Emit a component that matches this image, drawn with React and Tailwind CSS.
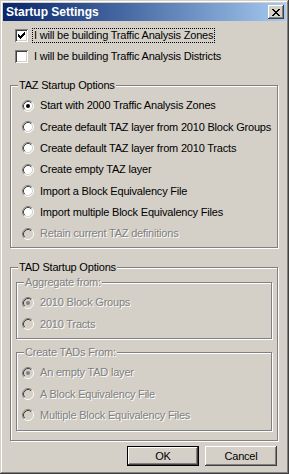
import React from "react";

const FACE = "#d4d0c8";

function Radio({ checked, disabled }) {
  const fill = disabled ? FACE : "#ffffff";
  const dot = disabled ? "#808080" : "#000000";
  return (
    <svg width="12" height="12" viewBox="0 0 12 12" className="shrink-0">
      <circle cx="6" cy="6" r="5" fill={fill} />
      <path d="M2.11 9.89 A5.5 5.5 0 0 1 9.89 2.11" fill="none" stroke="#808080" strokeWidth="1" />
      <path d="M9.89 2.11 A5.5 5.5 0 0 1 2.11 9.89" fill="none" stroke="#ffffff" strokeWidth="1" />
      <path d="M2.82 9.18 A4.5 4.5 0 0 1 9.18 2.82" fill="none" stroke="#404040" strokeWidth="1" />
      <path d="M9.18 2.82 A4.5 4.5 0 0 1 2.82 9.18" fill="none" stroke={FACE} strokeWidth="1" />
      {checked && <circle cx="6" cy="6" r="2" fill={dot} />}
    </svg>
  );
}

function Check({ checked }) {
  return (
    <div className="w-[13px] h-[13px] shrink-0 bg-white shadow-[inset_1px_1px_#808080,inset_-1px_-1px_#ffffff,inset_2px_2px_#404040,inset_-2px_-2px_#d4d0c8]">
      {checked && (
        <svg width="13" height="13" viewBox="0 0 13 13" shapeRendering="crispEdges">
          <rect x="9" y="3" width="1" height="1" fill="#000" />
          <rect x="8" y="4" width="2" height="1" fill="#000" />
          <rect x="3" y="5" width="1" height="1" fill="#000" />
          <rect x="7" y="5" width="3" height="1" fill="#000" />
          <rect x="3" y="6" width="2" height="1" fill="#000" />
          <rect x="6" y="6" width="3" height="1" fill="#000" />
          <rect x="3" y="7" width="5" height="1" fill="#000" />
          <rect x="4" y="8" width="3" height="1" fill="#000" />
          <rect x="5" y="9" width="1" height="1" fill="#000" />
        </svg>
      )}
    </div>
  );
}

function Label({ children, disabled }) {
  return (
    <span
      className={
        disabled
          ? "text-[#808080] [text-shadow:1px_1px_0_#ffffff] whitespace-nowrap"
          : "text-black whitespace-nowrap"
      }
    >
      {children}
    </span>
  );
}

function RadioRow({ label, checked, disabled }) {
  return (
    <div className="h-[21.33px] flex items-center gap-[6px]">
      <Radio checked={checked} disabled={disabled} />
      <Label disabled={disabled}>{label}</Label>
    </div>
  );
}

function Group({ title, disabled, className, children }) {
  return (
    <div
      className={
        "relative border border-[#808080] shadow-[inset_1px_1px_#ffffff,1px_1px_#ffffff] " +
        className
      }
    >
      <span className="absolute -top-[8px] left-[7px] px-[1px] bg-[#d4d0c8] leading-[14px]">
        <Label disabled={disabled}>{title}</Label>
      </span>
      {children}
    </div>
  );
}

function Button({ children, isDefault }) {
  return (
    <div
      className={
        "w-[72px] h-[20px] flex items-center justify-center text-black " +
        (isDefault
          ? "border border-black shadow-[inset_-1px_-1px_#404040,inset_1px_1px_#ffffff,inset_-2px_-2px_#808080]"
          : "shadow-[inset_-1px_-1px_#404040,inset_1px_1px_#ffffff,inset_-2px_-2px_#808080]")
      }
    >
      {children}
    </div>
  );
}

export default function App() {
  const taz = [
    "Start with 2000 Traffic Analysis Zones",
    "Create default TAZ layer from 2010 Block Groups",
    "Create default TAZ layer from 2010 Tracts",
    "Create empty TAZ layer",
    "Import a Block Equivalency File",
    "Import multiple Block Equivalency Files",
  ];

  return (
    <div
      className="w-[289px] h-[474px] bg-[#d4d0c8] p-[3px] flex flex-col text-[11px] tracking-[-0.2px] shadow-[inset_-1px_-1px_#404040,inset_1px_1px_#d4d0c8,inset_-2px_-2px_#808080,inset_2px_2px_#ffffff]"
      style={{ fontFamily: '"Liberation Sans", Arial, sans-serif' }}
    >
      {/* title bar */}
      <div className="h-[18px] flex items-center bg-gradient-to-r from-[#0a246a] to-[#a6caf0] pl-[3px] pr-[2px]">
        <span className="text-white font-bold text-[12px] tracking-normal">Startup Settings</span>
        <div className="ml-auto w-[16px] h-[14px] bg-[#d4d0c8] flex items-center justify-center shadow-[inset_-1px_-1px_#404040,inset_1px_1px_#ffffff,inset_-2px_-2px_#808080]">
          <svg width="8" height="7" viewBox="0 0 8 7" shapeRendering="crispEdges">
            <path d="M0 0h2v1h-2zM6 0h2v1h-2zM1 1h2v1h-2zM5 1h2v1h-2zM2 2h4v1h-4zM3 3h2v1h-2zM2 4h4v1h-4zM1 5h2v1h-2zM5 5h2v1h-2zM0 6h2v1h-2zM6 6h2v1h-2z" fill="#000" />
          </svg>
        </div>
      </div>

      <div className="flex-1 flex flex-col pl-[7px] pr-[8px] pt-[4px]">
        <div className="h-[21px] flex items-center pl-[5px] gap-[4px]">
          <Check checked />
          <span className="border border-dotted border-black px-[1px] leading-[13px]">
            I will be building Traffic Analysis Zones
          </span>
        </div>
        <div className="h-[21px] flex items-center pl-[5px] gap-[4px]">
          <Check />
          <span className="px-[2px]">I will be building Traffic Analysis Districts</span>
        </div>

        <Group title="TAZ Startup Options" className="mt-[18px] h-[163px] pt-[9px] pl-[11px]">
          {taz.map((t, i) => (
            <RadioRow key={t} label={t} checked={i === 0} />
          ))}
          <RadioRow label="Retain current TAZ definitions" disabled />
        </Group>

        <Group title="TAD Startup Options" className="mt-[19px] h-[174px] pt-[14px] px-[5px]">
          <Group title="Aggregate from:" disabled className="h-[57px] pt-[9px] pl-[5px]">
            <RadioRow label="2010 Block Groups" checked disabled />
            <RadioRow label="2010 Tracts" disabled />
          </Group>
          <Group title="Create TADs From:" disabled className="mt-[13px] h-[79px] pt-[9px] pl-[5px]">
            <RadioRow label="An empty TAD layer" checked disabled />
            <RadioRow label="A Block Equivalency File" disabled />
            <RadioRow label="Multiple Block Equivalency Files" disabled />
          </Group>
        </Group>

        <div className="mt-[5px] flex justify-end gap-[6px] pr-[1px]">
          <Button isDefault>OK</Button>
          <Button>Cancel</Button>
        </div>
      </div>
    </div>
  );
}
